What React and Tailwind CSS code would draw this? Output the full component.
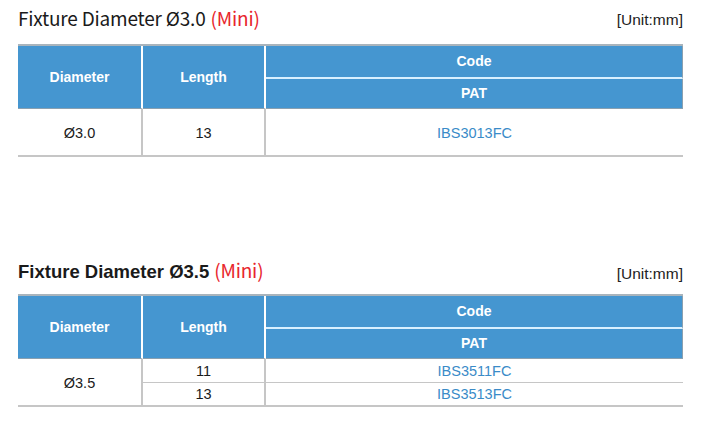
import React from "react";

function Header() {
  return (
    <div className="grid grid-cols-[125px_123px_417px] border-t-2 border-[#a9b4bc] bg-[#4596d0] text-white font-bold text-[14px]">
      <div className="row-span-2 flex items-center justify-center border-r-2 border-white border-b border-b-[#8aa0b0]">Diameter</div>
      <div className="row-span-2 flex items-center justify-center border-r-2 border-white border-b border-b-[#8aa0b0]">Length</div>
      <div className="h-[33px] flex items-center justify-center border-b-2 border-[#d8f0ff] border-r border-r-[#8aa0b0]">Code</div>
      <div className="h-[30px] flex items-center justify-center border-b border-[#8aa0b0] border-r border-r-[#8aa0b0]">PAT</div>
    </div>
  );
}

function Title({ bold, dia }) {
  return (
    <div className="flex items-end justify-between">
      <div className="flex items-baseline whitespace-nowrap">
        {bold ? (
          <span className="font-['Liberation_Sans',sans-serif] font-bold text-[18.5px] text-[#1a1a1a]">
            Fixture Diameter Ø{dia}
          </span>
        ) : (
          <span className="font-['Noto_Sans_CJK_KR',sans-serif] text-[19px] text-[#1a1a1a] tracking-[-0.2px]">
            Fixture Diameter Ø{dia}
          </span>
        )}
        <span className="font-['Noto_Sans_CJK_KR',sans-serif] text-[19px] text-[#e8262d] ml-[5px] tracking-[-0.2px]">(Mini)</span>
      </div>
      <div className="text-[15.5px] text-[#222] pb-[1px]">[Unit:mm]</div>
    </div>
  );
}

export default function App() {
  return (
    <div className="w-[708px] h-[432px] bg-white font-['Liberation_Sans',Arial,sans-serif] pl-[18px]">
      <div className="w-[665px]">
        <div className="h-[44px] pt-[4px]">
          <Title dia="3.0" />
        </div>
        <Header />
        <div className="grid grid-cols-[125px_123px_417px] h-[48px] border-b-2 border-[#c6c6c6] text-[14.5px] text-[#1a1a1a]">
          <div className="flex items-center justify-center pt-[4px] border-r-2 border-[#c6c6c6]">Ø3.0</div>
          <div className="flex items-center justify-center pt-[4px] border-r-2 border-[#c6c6c6]">13</div>
          <div className="flex items-center justify-center pt-[4px] text-[#3a8bc8]">IBS3013FC</div>
        </div>

        <div className="h-[137px] pt-[99px]">
          <Title bold dia="3.5" />
        </div>
        <Header />
        <div className="grid grid-cols-[125px_123px_417px] border-b-2 border-[#c6c6c6] text-[14.5px] text-[#1a1a1a]">
          <div className="row-span-2 flex items-center justify-center pt-[3px] border-r-2 border-[#c6c6c6]">Ø3.5</div>
          <div className="h-[24px] flex items-center justify-center pt-[3px] border-r-2 border-b border-[#c6c6c6]">11</div>
          <div className="h-[24px] flex items-center justify-center pt-[3px] border-b border-[#c6c6c6] text-[#3a8bc8]">IBS3511FC</div>
          <div className="h-[22px] flex items-center justify-center pt-[2px] border-r-2 border-[#c6c6c6]">13</div>
          <div className="h-[22px] flex items-center justify-center pt-[2px] text-[#3a8bc8]">IBS3513FC</div>
        </div>
      </div>
    </div>
  );
}
